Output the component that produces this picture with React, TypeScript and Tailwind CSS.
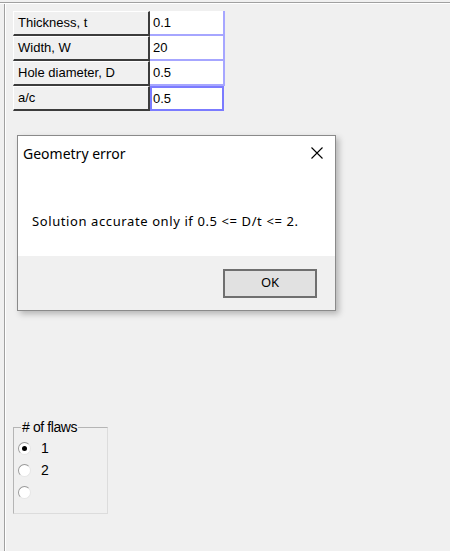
import React from "react";

const rows = [
  { label: "Thickness, t", value: "0.1" },
  { label: "Width, W", value: "20" },
  { label: "Hole diameter, D", value: "0.5" },
  { label: "a/c", value: "0.5", focused: true },
];

function Radio({ checked, label }: { checked?: boolean; label: string }) {
  return (
    <div className="flex items-center h-[22px] gap-[10px]">
      <span className="relative w-[13px] h-[13px] rounded-full bg-white border border-t-[#9a9a9a] border-l-[#9a9a9a] border-r-[#e6e6e6] border-b-[#e6e6e6] flex items-center justify-center">
        {checked && <span className="w-[5px] h-[5px] rounded-full bg-black" />}
      </span>
      <span className="text-[14px] text-black leading-none">{label}</span>
    </div>
  );
}

export default function App() {
  return (
    <div
      className="relative w-[450px] h-[551px] bg-[#f0f0f0] overflow-hidden"
      style={{ fontFamily: '"Liberation Sans", Arial, sans-serif' }}
    >
      {/* frame lines */}
      <div className="mt-[2px] h-[2px] border-t border-[#a0a0a0] border-b-white border-b" />
      <div className="flex h-[547px]">
        <div className="ml-[4px] w-[2px] border-l border-[#a0a0a0] border-r border-r-white" />

        <div className="flex flex-col pl-[7px] pt-[7px]">
          {/* input table */}
          <div className="flex flex-col">
            {rows.map((r) => (
              <div key={r.label} className="flex h-[25px]">
                <div className="w-[137px] flex items-center pl-[4px] text-[13px] text-black border-t border-l border-t-white border-l-white border-b-2 border-r-2 border-b-[#3c3c3c] border-r-[#3c3c3c]">
                  {r.label}
                </div>
                {r.focused ? (
                  <div className="w-[74px] bg-white border-2 border-[#7b7bff] flex items-center pl-[1px] text-[13px] text-black">
                    {r.value}
                  </div>
                ) : (
                  <div className="w-[75px] bg-white border-r-2 border-b-2 border-[#a6a6ff] flex items-center pl-[3px] text-[13px] text-black">
                    {r.value}
                  </div>
                )}
              </div>
            ))}
          </div>

          {/* # of flaws group */}
          <fieldset className="mt-[309px] w-[95px] h-[94px] border border-[#b5b5b5] border-r-[#dcdcdc] border-b-[#dcdcdc] px-[4px] pt-0 m-0">
            <legend className="text-[14px] text-black px-[1px] ml-[3px] leading-none tracking-[-0.4px]">
              # of flaws
            </legend>
            <div className="flex flex-col mt-[3px]">
              <Radio checked label="1" />
              <Radio label="2" />
              <Radio label="" />
            </div>
          </fieldset>
        </div>
      </div>

      {/* modal dialog */}
      <div
        className="absolute left-[17px] top-[135px] w-[319px] h-[176px] bg-white border border-[#8a8a8a] shadow-[3px_3px_6px_rgba(0,0,0,0.25)] flex flex-col"
        style={{ fontFamily: '"Noto Sans", "Open Sans", sans-serif' }}
      >
        <div className="flex items-center justify-between h-[34px] pl-[5px] pr-[12px]">
          <span className="text-[14px] text-black">Geometry error</span>
          <svg width="12" height="12" viewBox="0 0 12 12">
            <path d="M0.5 0.5 L11.5 11.5 M11.5 0.5 L0.5 11.5" stroke="#000" strokeWidth="1.1" />
          </svg>
        </div>
        <div className="flex-1 flex items-center pl-[14px] pt-[18px]">
          <span className="text-[13px] tracking-[0.6px] text-black">
            Solution accurate only if 0.5 &lt;= D/t &lt;= 2.
          </span>
        </div>
        <div className="h-[54px] bg-[#f0f0f0] flex items-center justify-end pr-[18px]">
          <button className="w-[94px] h-[29px] bg-[#e1e1e1] border-2 border-[#6f6f6f] text-[13px] text-black flex items-center justify-center">
            OK
          </button>
        </div>
      </div>
    </div>
  );
}
